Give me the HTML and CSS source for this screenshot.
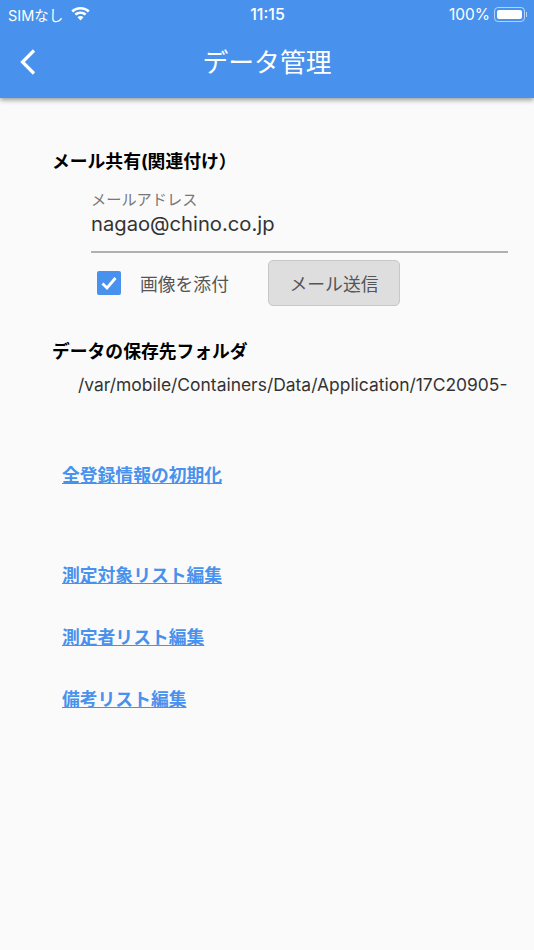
FILE: index.html
```html
<!DOCTYPE html>
<html lang="ja">
<head>
<meta charset="utf-8">
<title>データ管理</title>
<link rel="stylesheet" href="styles.css">
</head>
<body>
<header class="appbar">
  <div class="status">
    <div class="status-left">
      <span>SIMなし</span>
      <svg class="wifi" width="19" height="14" viewBox="0 0 19 14"><path d="M9.500 0C5.800 0 2.700 1.300.3 3.600l1.800 1.800C4.100 3.500 6.600 2.500 9.500 2.500s5.400 1 7.400 2.900l1.800-1.800C16.300 1.300 13.200 0 9.500 0zM9.500 4.500c-2.400 0-4.400.9-6 2.300l1.800 1.800C6.400 7.600 7.900 7 9.500 7s3.100.6 4.200 1.600l1.800-1.800c-1.600-1.400-3.600-2.300-6-2.300zM9.500 9c-1.200 0-2.200.4-3 1.200l3 3.300 3-3.300C11.700 9.400 10.700 9 9.500 9z" fill="#fff"/></svg>
    </div>
    <div class="status-time">11:15</div>
    <div class="status-right">
      <span>100%</span>
      <span class="battery"><span class="battery-fill"></span></span>
      <span class="battery-tip"></span>
    </div>
  </div>
  <div class="nav">
    <svg class="back" width="18" height="28" viewBox="0 0 18 28"><path d="M15 2.500 3.500 14 15 25.500" fill="none" stroke="#fff" stroke-width="3.200"/></svg>
    <h1 class="title">データ管理</h1>
  </div>
</header>
<main class="content">
  <section class="mail">
    <h2 class="heading">メール共有(関連付け）</h2>
    <div class="field">
      <div class="field-label">メールアドレス</div>
      <div class="field-value">nagao@chino.co.jp</div>
    </div>
    <div class="actions">
      <span class="checkbox"><svg width="18" height="16" viewBox="0 0 18 16"><path d="M2.500 8.500 7 13 15.500 3" fill="none" stroke="#fff" stroke-width="2.800"/></svg></span>
      <span class="check-label">画像を添付</span>
      <button class="send" type="button">メール送信</button>
    </div>
  </section>
  <section class="folder">
    <h2 class="heading">データの保存先フォルダ</h2>
    <div class="path">/var/mobile/Containers/Data/Application/17C20905-</div>
  </section>
  <a class="link link-init" href="#">全登録情報の初期化</a>
  <nav class="lists">
    <a class="link" href="#">測定対象リスト編集</a>
    <a class="link" href="#">測定者リスト編集</a>
    <a class="link" href="#">備考リスト編集</a>
  </nav>
</main>
</body>
</html>
```
FILE: styles.css
```css
* { box-sizing: border-box; }
html, body { margin: 0; padding: 0; }
body {
  width: 534px;
  height: 950px;
  overflow: hidden;
  background: #fafafa;
  font-family: "Inter", "Noto Sans CJK JP", sans-serif;
  display: flex;
  flex-direction: column;
}
.appbar {
  height: 98px;
  flex: none;
  background: #4891ec;
  color: #fff;
  box-shadow: 0 2px 5px rgba(0,0,0,.4);
}
.status {
  height: 28px;
  display: grid;
  grid-template-columns: 1fr auto 1fr;
  align-items: center;
  padding: 0 7px 0 8px;
  font-size: 14.500px;
}
.status-left { display: flex; align-items: center; gap: 8px; }
.status-time { font-size: 16px; font-weight: 500; }
.status-right { display: flex; align-items: center; justify-content: flex-end; gap: 4px; font-size: 15.500px; }
.battery {
  width: 31px;
  height: 15px;
  border: 1px solid rgba(255,255,255,.6);
  border-radius: 4px;
  padding: 2px;
  display: flex;
}
.battery-fill { flex: 1; background: #fff; border-radius: 2px; }
.battery-tip { width: 1px; height: 5px; margin-left: -3px; background: rgba(255,255,255,.6); }
.nav {
  height: 70px;
  display: flex;
  align-items: center;
  justify-content: center;
  position: relative;
}
.back { position: absolute; left: 19px; top: 20px; }
.title { margin: 0; font-size: 25.800px; font-weight: 400; line-height: 1; }
.content {
  flex: 1;
  padding: 54px 26px 0 52px;
  display: flex;
  flex-direction: column;
}
.heading {
  margin: 0;
  font-size: 17.800px;
  line-height: 20px;
  font-weight: 700;
  color: #000;
}
.field {
  margin: 19px 0 0 39px;
  height: 62px;
  border-bottom: 2px solid #b0b0b0;
}
.field-label { font-size: 15.200px; line-height: 18px; color: #777; }
.field-value { font-size: 20.200px; line-height: 30px; color: #333; }
.actions { display: flex; align-items: center; margin: 7px 0 0 45px; height: 46px; }
.checkbox {
  width: 24px;
  height: 24px;
  border-radius: 2px;
  background: #4891ec;
  display: flex;
  align-items: center;
  justify-content: center;
}
.check-label { margin-left: 19px; width: 128px; font-size: 17.800px; color: #555; }
.send {
  width: 132px;
  height: 46px;
  border: 1px solid #c8c8c8;
  border-radius: 5px;
  background: #dedede;
  color: #555;
  font: inherit;
  font-size: 17.800px;
}
.folder { margin-top: 36px; }
.path {
  margin: 12px 0 0 26px;
  width: 430px;
  white-space: nowrap;
  font-size: 17.450px;
  line-height: 22px;
  color: #333;
}
.link {
  display: block;
  color: #4891ec;
  font-size: 17.800px;
  font-weight: 700;
  line-height: 22px;
  text-decoration: underline;
  margin-left: 10px;
}
.link-init { margin-top: 69px; }
.lists { margin-top: 78px; display: flex; flex-direction: column; gap: 40px; }
```
